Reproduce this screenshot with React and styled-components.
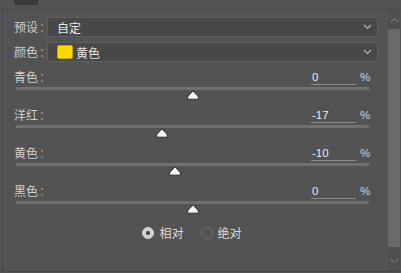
import React from 'react';
import styled, { createGlobalStyle } from 'styled-components';

const GlobalStyle = createGlobalStyle`
  html, body { margin: 0; padding: 0; background: #535353; }
  body { font-family: "Noto Sans CJK SC", "Noto Sans", sans-serif; }
`;

const sliders = [
  { label: '青色', value: 0 },
  { label: '洋红', value: -17 },
  { label: '黄色', value: -10 },
  { label: '黑色', value: 0 },
];

const Panel = styled.div`
  width: 401px;
  height: 273px;
  background: #535353;
  display: flex;
  flex-direction: column;
  overflow: hidden;
`;

const TopBar = styled.div`
  height: 9px;
  border-bottom: 1px solid #464646;
  padding-left: 14px;
`;

const TopButton = styled.div`
  width: 22px;
  height: 4px;
  background: #3b3b3b;
  border-radius: 0 0 3px 3px;
  border: 1px solid #333;
  border-top: none;
`;

const Body = styled.div`
  flex: 1;
  display: flex;
  border-left: 1px solid #464646;
  margin-left: 2px;
  border-bottom: 1px solid #454545;
  margin-bottom: 1px;
`;

const Content = styled.div`
  flex: 1;
  padding: 7px 0 0 11px;
  display: flex;
  flex-direction: column;
`;

const SelectRow = styled.div`
  display: flex;
  align-items: center;
  height: 20px;
  margin-bottom: 5px;
`;

const Label = styled.span`
  color: #cfcfcf;
  font-size: 12px;
  line-height: 16px;
  white-space: nowrap;
  width: ${p => p.$w || 'auto'};
`;

const Colon = styled.span`
  color: #b39a84;
  margin-left: 1px;
`;

const Select = styled.div`
  width: 320px;
  height: 18px;
  background: #484848;
  border: 1px solid #5e5e5e;
  border-radius: 2px;
  display: flex;
  align-items: center;
  padding-left: 9px;
  box-sizing: content-box;
  position: relative;
  color: #e6e6e6;
  font-size: 12px;
`;

const Chevron = styled.svg`
  position: absolute;
  right: 5px;
  top: 6px;
`;

const Swatch = styled.span`
  width: 14px;
  height: 12px;
  background: #ffd800;
  border: 1px solid #c7a600;
  border-radius: 2px;
  margin-right: 3px;
`;

const SliderBlock = styled.div`
  width: 355px;
  height: 38px;
  padding-left: 2px;
  margin-top: ${p => p.$first ? '2px' : '0'};
`;

const SliderHead = styled.div`
  display: flex;
  align-items: center;
  height: 16px;
  margin-left: -2px;
`;

const ValueBox = styled.div`
  margin-left: auto;
  width: 44px;
  height: 14px;
  border-bottom: 1px solid #8b8b8b;
  color: #e4ecf2;
  font-family: "Liberation Sans", Arial, sans-serif;
  font-size: 11.5px;
  line-height: 14px;
  padding-left: 1px;
  box-sizing: content-box;
`;

const Percent = styled.span`
  width: 11px;
  margin-left: 4px;
  color: #c9d6e2;
  font-family: "Liberation Sans", Arial, sans-serif;
  font-size: 11.5px;
`;

const Track = styled.div`
  position: relative;
  width: 353px;
  height: 3px;
  margin-top: 2px;
  background: #707070;
`;

const Thumb = styled.svg`
  position: absolute;
  top: 3px;
  margin-left: -6px;
`;

const RadioRow = styled.div`
  display: flex;
  justify-content: center;
  gap: 17px;
  margin-top: 3px;
  padding-right: 18px;
`;

const Radio = styled.label`
  display: flex;
  align-items: center;
  gap: 5px;
  color: #dcdcdc;
  font-size: 12px;
`;

const RadioDot = styled.span`
  width: 12px;
  height: 12px;
  border-radius: 50%;
  box-sizing: border-box;
  background: ${p => p.$on ? '#d2d2d2' : 'transparent'};
  border: 1px solid ${p => p.$on ? '#d2d2d2' : '#727272'};
  display: flex;
  align-items: center;
  justify-content: center;
  &::after {
    content: '';
    width: 4px;
    height: 4px;
    border-radius: 50%;
    background: ${p => p.$on ? '#3a3a3a' : 'transparent'};
  }
`;

const ScrollBar = styled.div`
  width: 12px;
  margin-right: 1px;
  background: #4f4f4f;
  display: flex;
  flex-direction: column;
  align-items: center;
`;

const ScrollThumb = styled.div`
  width: 12px;
  height: 218px;
  background: #696969;
`;

const Arrow = styled.svg`
  margin: 7px 0 6px;
`;

function Caret() {
  return (
    <Chevron width="9" height="6" viewBox="0 0 9 6">
      <path d="M1 1 L4.5 4.5 L8 1" stroke="#bdbdbd" strokeWidth="1.1" fill="none" />
    </Chevron>
  );
}

function Slider({ label, value, first }) {
  const pos = ((value + 100) / 200) * 100;
  return (
    <SliderBlock $first={first}>
      <SliderHead>
        <Label>{label}<Colon>：</Colon></Label>
        <ValueBox>{value}</ValueBox>
        <Percent>%</Percent>
      </SliderHead>
      <Track>
        <Thumb width="12" height="10" viewBox="0 0 12 10" style={{ left: `${pos}%` }}>
          <path d="M6 0.8 L10.8 6 Q11.4 6.8 11.4 8 L11.4 9.2 L0.6 9.2 L0.6 8 Q0.6 6.8 1.2 6 Z"
            fill="#f4f4f4" stroke="#2a2a2a" strokeWidth="1" strokeLinejoin="round" />
        </Thumb>
      </Track>
    </SliderBlock>
  );
}

export default function App() {
  return (
    <>
      <GlobalStyle />
      <Panel>
        <TopBar><TopButton /></TopBar>
        <Body>
          <Content>
            <SelectRow>
              <Label $w="33px">预设<Colon>：</Colon></Label>
              <Select>自定<Caret /></Select>
            </SelectRow>
            <SelectRow>
              <Label $w="33px">颜色<Colon>：</Colon></Label>
              <Select><Swatch />黄色<Caret /></Select>
            </SelectRow>
            {sliders.map((s, i) => <Slider key={s.label} first={i === 0} {...s} />)}
            <RadioRow>
              <Radio><RadioDot $on />相对</Radio>
              <Radio><RadioDot />绝对</Radio>
            </RadioRow>
          </Content>
          <ScrollBar>
            <Arrow width="9" height="6" viewBox="0 0 9 6">
              <path d="M1 5 L4.5 1.5 L8 5" stroke="#8a8a8a" strokeWidth="1" fill="none" />
            </Arrow>
            <ScrollThumb />
            <Arrow width="9" height="6" viewBox="0 0 9 6" style={{ marginTop: 'auto', marginBottom: '7px' }}>
              <path d="M1 1 L4.5 4.5 L8 1" stroke="#8a8a8a" strokeWidth="1" fill="none" />
            </Arrow>
          </ScrollBar>
        </Body>
      </Panel>
    </>
  );
}
